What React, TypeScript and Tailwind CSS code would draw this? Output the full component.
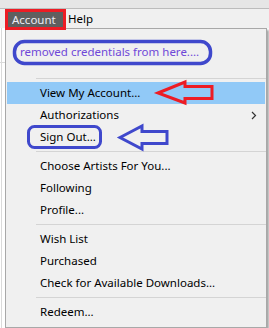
import React from 'react'

const groups: { label: string; submenu?: boolean; active?: boolean }[][] = [
  [
    { label: 'View My Account...', active: true },
    { label: 'Authorizations', submenu: true },
    { label: 'Sign Out...' },
  ],
  [{ label: 'Choose Artists For You...' }, { label: 'Following' }, { label: 'Profile...' }],
  [{ label: 'Wish List' }, { label: 'Purchased' }, { label: 'Check for Available Downloads...' }],
  [{ label: 'Redeem...' }],
]

function Separator() {
  return (
    <div className="h-[7px] pt-[3px]">
      <div className="h-px ml-[30px] bg-[#d4d4d4]" />
    </div>
  )
}

function MenuItem(props: { label: string; submenu?: boolean; active?: boolean }) {
  const { label, submenu, active } = props
  return (
    <div
      className={
        active
          ? 'h-[22px] mx-[1px] flex items-center pl-[33px] pr-[7px] bg-[#91c9f7] text-black'
          : 'h-[22px] mx-[1px] flex items-center pl-[33px] pr-[7px] text-black'
      }
    >
      <span className="flex-1 whitespace-nowrap">{label}</span>
      {submenu && (
        <svg width="6" height="9" viewBox="0 0 6 9" className="mr-[1px]">
          <polyline points="1,1 4.5,4.5 1,8" fill="none" stroke="#333" strokeWidth="1.2" />
        </svg>
      )}
    </div>
  )
}

export default function App() {
  return (
    <div className="relative w-[269px] h-[328px] bg-white overflow-hidden font-['Noto_Sans',sans-serif] text-[11.5px] leading-none">
      <div className="h-[9px] bg-[#e6e6e6] border-b border-[#bcbcbc]" />
      <div className="h-[19px] bg-[#f0f0f0] flex items-stretch pl-[6px]">
        <div className="mt-[3px] mb-[1px] w-[57px] pl-[6px] flex items-center bg-[#5f5f5f] text-[#ececf4]">
          Account
        </div>
        <div className="px-[5px] flex items-center text-black">Help</div>
      </div>

      <div className="flex">
        <div className="w-[5px] h-[300px] relative">
          <div className="absolute left-[1px] top-0 bottom-0 w-px bg-[#dadada]" />
          <div className="absolute left-0 right-0 top-[34px] h-px bg-[#dadada]" />
        </div>
        <div className="w-[262px] bg-[#f0f0f0] border border-[#a8a8a8] shadow-[2px_2px_2px_rgba(0,0,0,0.35)]">
          <div className="h-[46px] flex items-center pl-[14px] pb-[1px] text-[#6f48d8] whitespace-nowrap">
            removed credentials from here....
          </div>
          {groups.map((group, gi) => (
            <div key={gi}>
              <Separator />
              {group.map((item) => (
                <MenuItem key={item.label} {...item} />
              ))}
            </div>
          ))}
        </div>
      </div>

      {/* annotations drawn on top of the screenshot */}
      <div className="absolute left-[5px] top-[9px] w-[61px] h-[21px] border-[3px] border-[#ed1c24]" />
      <svg className="absolute inset-0 pointer-events-none" width="269" height="328" viewBox="0 0 269 328">
        <rect x="14.5" y="41.5" width="196" height="22" rx="10" fill="none" stroke="#3f48cc" strokeWidth="3.5" />
        <rect x="28.5" y="126.5" width="72" height="21" rx="6" fill="none" stroke="#3f48cc" strokeWidth="3" />
        <polygon
          points="158,93 185,82 185,86.5 212,86.5 212,98.5 185,98.5 185,103"
          fill="none"
          stroke="#ed1c24"
          strokeWidth="3"
          strokeLinejoin="miter"
        />
        <polygon
          points="120,137.5 142,126 142,131.5 167,131.5 167,143.5 142,143.5 142,149"
          fill="none"
          stroke="#3f48cc"
          strokeWidth="3"
        />
      </svg>
    </div>
  )
}
